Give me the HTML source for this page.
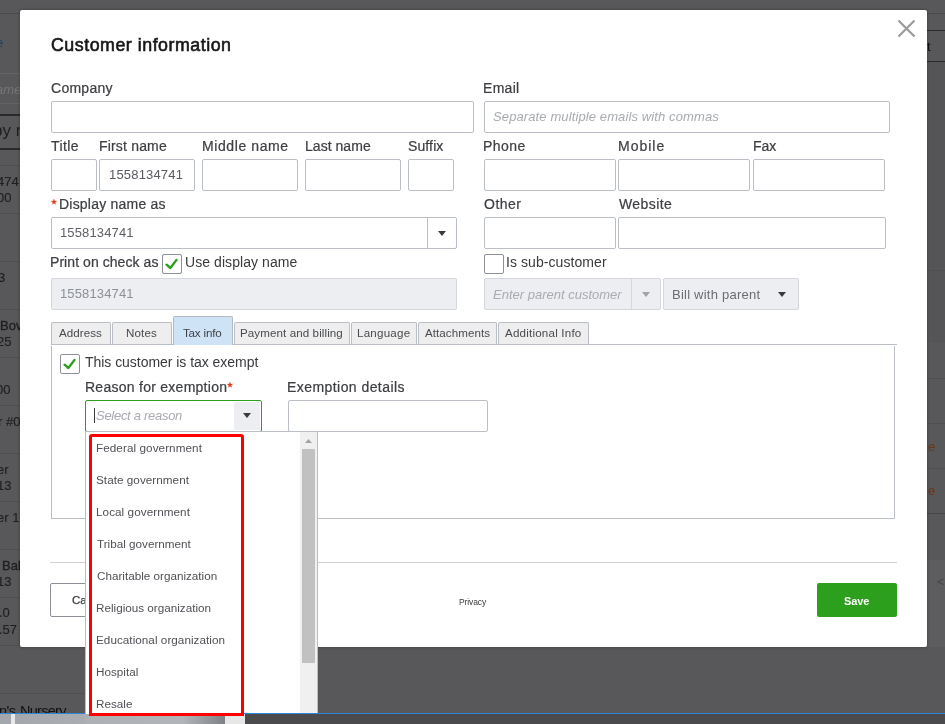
<!DOCTYPE html>
<html><head><meta charset="utf-8"><style>
html,body{margin:0;padding:0;}
body{width:945px;height:724px;overflow:hidden;position:relative;background:#58585a;font-family:"Liberation Sans",sans-serif;}
.t{position:absolute;white-space:nowrap;will-change:transform;}
.r{position:absolute;}
</style></head><body>
<div class="r" style="left:0px;top:13px;width:20px;height:1px;background:#4a4a4c"></div>
<div class="r" style="left:927px;top:13px;width:18px;height:1px;background:#4a4a4c"></div>
<div class="r" style="left:0px;top:73px;width:20px;height:1px;background:#636365"></div>
<div class="r" style="left:0px;top:103px;width:20px;height:1px;background:#636365"></div>
<div class="r" style="left:0px;top:114px;width:20px;height:2px;background:#2a2a2b"></div>
<div class="r" style="left:0px;top:148px;width:20px;height:2px;background:#2a2a2b"></div>
<div class="r" style="left:0px;top:165px;width:20px;height:1px;background:#4f4f51"></div>
<div class="r" style="left:0px;top:213px;width:20px;height:1px;background:#4f4f51"></div>
<div class="r" style="left:0px;top:261px;width:20px;height:1px;background:#4f4f51"></div>
<div class="r" style="left:0px;top:309px;width:20px;height:1px;background:#4f4f51"></div>
<div class="r" style="left:0px;top:357px;width:20px;height:1px;background:#4f4f51"></div>
<div class="r" style="left:0px;top:405px;width:20px;height:1px;background:#4f4f51"></div>
<div class="r" style="left:0px;top:453px;width:20px;height:1px;background:#4f4f51"></div>
<div class="r" style="left:0px;top:501px;width:20px;height:1px;background:#4f4f51"></div>
<div class="r" style="left:0px;top:549px;width:20px;height:1px;background:#4f4f51"></div>
<div class="r" style="left:0px;top:597px;width:20px;height:1px;background:#4f4f51"></div>
<div class="r" style="left:0px;top:645px;width:20px;height:1px;background:#4f4f51"></div>
<div class="r" style="left:0px;top:693px;width:85px;height:1px;background:#4f4f51"></div>
<div class="t" style="left:-4.50px;top:35.50px;color:#15426a;font-size:13px;line-height:13px;">e</div>
<div class="t" style="left:-4.00px;top:82.50px;color:#747476;font-size:13px;line-height:13px;font-style:italic;">ame</div>
<div class="t" style="left:-7.00px;top:121.61px;color:#1e1e1f;font-size:17px;line-height:17px;">by r</div>
<div class="t" style="left:-3.00px;top:175.00px;color:#1f1f20;font-size:13px;line-height:13px;-webkit-text-stroke:0.15px #1f1f20;">474</div>
<div class="t" style="left:-3.50px;top:191.00px;color:#1f1f20;font-size:13px;line-height:13px;-webkit-text-stroke:0.15px #1f1f20;">00</div>
<div class="t" style="left:-2.50px;top:271.00px;color:#1f1f20;font-size:13px;line-height:13px;-webkit-text-stroke:0.15px #1f1f20;">3</div>
<div class="t" style="left:-0.50px;top:318.50px;color:#1e1e1f;font-size:13px;line-height:13px;-webkit-text-stroke:0.3px #1e1e1f;">Bov</div>
<div class="t" style="left:-3.50px;top:334.70px;color:#1f1f20;font-size:13px;line-height:13px;-webkit-text-stroke:0.15px #1f1f20;">25</div>
<div class="t" style="left:-4.50px;top:383.00px;color:#1f1f20;font-size:13px;line-height:13px;-webkit-text-stroke:0.15px #1f1f20;">00</div>
<div class="t" style="left:-2.00px;top:414.60px;color:#1f1f20;font-size:13px;line-height:13px;-webkit-text-stroke:0.15px #1f1f20;">r #0</div>
<div class="t" style="left:-3.00px;top:462.60px;color:#1f1f20;font-size:13px;line-height:13px;-webkit-text-stroke:0.15px #1f1f20;">er</div>
<div class="t" style="left:-3.50px;top:478.60px;color:#1f1f20;font-size:13px;line-height:13px;-webkit-text-stroke:0.15px #1f1f20;">13</div>
<div class="t" style="left:-3.00px;top:510.50px;color:#1f1f20;font-size:13px;line-height:13px;-webkit-text-stroke:0.15px #1f1f20;">er 1</div>
<div class="t" style="left:2.30px;top:559.00px;color:#1e1e1f;font-size:13px;line-height:13px;-webkit-text-stroke:0.3px #1e1e1f;">Bal</div>
<div class="t" style="left:-3.50px;top:574.50px;color:#1f1f20;font-size:13px;line-height:13px;-webkit-text-stroke:0.15px #1f1f20;">13</div>
<div class="t" style="left:-0.80px;top:606.00px;color:#1f1f20;font-size:13px;line-height:13px;-webkit-text-stroke:0.15px #1f1f20;">.0</div>
<div class="t" style="left:-0.80px;top:622.60px;color:#1f1f20;font-size:13px;line-height:13px;-webkit-text-stroke:0.15px #1f1f20;">.57</div>
<div class="t" style="left:20.20px;top:703.73px;color:#111112;font-size:14.5px;line-height:14.5px;letter-spacing:-0.717px;">Nursery</div>
<div class="t" style="left:-0.70px;top:703.73px;color:#111112;font-size:14.5px;line-height:14.5px;letter-spacing:-0.500px;">n's</div>
<div class="r" style="left:927px;top:30px;width:18px;height:1px;background:#2a2a2b"></div>
<div class="r" style="left:927px;top:61px;width:18px;height:1px;background:#2a2a2b"></div>
<div class="r" style="left:927px;top:62px;width:18px;height:281px;background:#555557"></div>
<div class="r" style="left:927px;top:270px;width:18px;height:1px;background:#4f4f51"></div>
<div class="r" style="left:927px;top:378px;width:18px;height:1px;background:#4f4f51"></div>
<div class="r" style="left:927px;top:423px;width:18px;height:1px;background:#4f4f51"></div>
<div class="r" style="left:927px;top:468px;width:18px;height:1px;background:#4f4f51"></div>
<div class="t" style="left:927.00px;top:40.00px;color:#111;font-size:13px;line-height:13px;">t</div>
<div class="t" style="left:927.50px;top:439.50px;color:#6e3414;font-size:13px;line-height:13px;">e</div>
<div class="t" style="left:927.50px;top:484.00px;color:#6e3414;font-size:13px;line-height:13px;">e</div>
<div class="r" style="left:927px;top:513px;width:18px;height:1px;background:#454547"></div>
<div class="r" style="left:927px;top:560px;width:18px;height:87px;background:#5d5d5f"></div>
<div class="t" style="left:937.30px;top:575.84px;color:#434345;font-size:12px;line-height:12px;">&lt;</div>
<div class="r" style="left:0px;top:713px;width:945px;height:1px;background:#2f86d6"></div>
<div class="r" style="left:0px;top:714px;width:945px;height:10px;background:#4b4b4d"></div>
<div class="r" style="left:0px;top:714px;width:225px;height:10px;background:linear-gradient(90deg,#a3a7ab 0%,#b1b5b9 80%,#7e8286 100%)"></div>
<div class="r" style="left:11px;top:714px;width:4px;height:10px;background:#e9e9e9"></div>
<div class="r" style="left:225px;top:714px;width:20px;height:10px;background:#e7e7e7"></div>
<div class="r" style="left:20px;top:10px;width:907px;height:637px;background:#fff;border-radius:2px;box-shadow:0 0 3px rgba(0,0,0,.35)"></div>
<svg class="r" style="left:896px;top:18px" width="21" height="21" viewBox="0 0 21 21"><path d="M2.5 2.5 L18.5 18.5 M18.5 2.5 L2.5 18.5" stroke="#9a9a9a" stroke-width="2.2" fill="none"/></svg>
<div class="t" style="left:51.30px;top:36.73px;color:#161616;font-size:17.8px;line-height:17.8px;-webkit-text-stroke:0.6px #161616;letter-spacing:0.526px;">Customer information</div>
<div class="t" style="left:51.20px;top:80.95px;color:#3d3e42;font-size:14px;line-height:14px;-webkit-text-stroke:0.22px #3d3e42;letter-spacing:0.267px;">Company</div>
<div class="t" style="left:483.00px;top:80.95px;color:#3d3e42;font-size:14px;line-height:14px;-webkit-text-stroke:0.22px #3d3e42;letter-spacing:0.300px;">Email</div>
<div class="r" style="left:51px;top:101px;width:423px;height:32px;background:#fff;border:1px solid #babec5;border-radius:2px;box-sizing:border-box"></div>
<div class="r" style="left:484px;top:101px;width:406px;height:32px;background:#fff;border:1px solid #babec5;border-radius:2px;box-sizing:border-box"></div>
<div class="t" style="left:492.70px;top:110.00px;color:#a8abb1;font-size:13px;line-height:13px;font-style:italic;letter-spacing:0.114px;">Separate multiple emails with commas</div>
<div class="t" style="left:50.50px;top:139.15px;color:#3d3e42;font-size:14px;line-height:14px;-webkit-text-stroke:0.22px #3d3e42;letter-spacing:0.375px;">Title</div>
<div class="t" style="left:98.60px;top:139.15px;color:#3d3e42;font-size:14px;line-height:14px;-webkit-text-stroke:0.22px #3d3e42;letter-spacing:0.178px;">First name</div>
<div class="t" style="left:202.10px;top:139.15px;color:#3d3e42;font-size:14px;line-height:14px;-webkit-text-stroke:0.22px #3d3e42;letter-spacing:0.600px;">Middle name</div>
<div class="t" style="left:304.70px;top:139.15px;color:#3d3e42;font-size:14px;line-height:14px;-webkit-text-stroke:0.22px #3d3e42;letter-spacing:0.037px;">Last name</div>
<div class="t" style="left:408.00px;top:139.15px;color:#3d3e42;font-size:14px;line-height:14px;-webkit-text-stroke:0.22px #3d3e42;letter-spacing:0.120px;">Suffix</div>
<div class="t" style="left:483.00px;top:139.15px;color:#3d3e42;font-size:14px;line-height:14px;-webkit-text-stroke:0.22px #3d3e42;letter-spacing:0.425px;">Phone</div>
<div class="t" style="left:617.80px;top:139.15px;color:#3d3e42;font-size:14px;line-height:14px;-webkit-text-stroke:0.22px #3d3e42;letter-spacing:1.000px;">Mobile</div>
<div class="t" style="left:752.60px;top:139.15px;color:#3d3e42;font-size:14px;line-height:14px;-webkit-text-stroke:0.22px #3d3e42;">Fax</div>
<div class="r" style="left:51px;top:159px;width:46px;height:32px;background:#fff;border:1px solid #babec5;border-radius:2px;box-sizing:border-box"></div>
<div class="r" style="left:99px;top:159px;width:96px;height:32px;background:#fff;border:1px solid #babec5;border-radius:2px;box-sizing:border-box"></div>
<div class="r" style="left:202px;top:159px;width:96px;height:32px;background:#fff;border:1px solid #babec5;border-radius:2px;box-sizing:border-box"></div>
<div class="r" style="left:305px;top:159px;width:96px;height:32px;background:#fff;border:1px solid #babec5;border-radius:2px;box-sizing:border-box"></div>
<div class="r" style="left:408px;top:159px;width:46px;height:32px;background:#fff;border:1px solid #babec5;border-radius:2px;box-sizing:border-box"></div>
<div class="r" style="left:484px;top:159px;width:132px;height:32px;background:#fff;border:1px solid #babec5;border-radius:2px;box-sizing:border-box"></div>
<div class="r" style="left:618px;top:159px;width:132px;height:32px;background:#fff;border:1px solid #babec5;border-radius:2px;box-sizing:border-box"></div>
<div class="r" style="left:753px;top:159px;width:132px;height:32px;background:#fff;border:1px solid #babec5;border-radius:2px;box-sizing:border-box"></div>
<div class="t" style="left:108.50px;top:167.60px;color:#5a5b60;font-size:13px;line-height:13px;letter-spacing:0.178px;">1558134741</div>
<svg class="r" style="left:49.6px;top:197.9px" width="8" height="8"><polygon points="4.00,1.10 4.72,3.01 6.76,3.10 5.16,4.38 5.70,6.35 4.00,5.22 2.30,6.35 2.84,4.38 1.24,3.10 3.28,3.01" fill="#de3f1f" stroke="#de3f1f" stroke-width="0.3" stroke-linejoin="round"/></svg>
<div class="t" style="left:58.50px;top:197.15px;color:#3d3e42;font-size:14px;line-height:14px;-webkit-text-stroke:0.22px #3d3e42;letter-spacing:0.214px;">Display name as</div>
<div class="t" style="left:484.00px;top:197.15px;color:#3d3e42;font-size:14px;line-height:14px;-webkit-text-stroke:0.22px #3d3e42;letter-spacing:0.500px;">Other</div>
<div class="t" style="left:619.00px;top:197.15px;color:#3d3e42;font-size:14px;line-height:14px;-webkit-text-stroke:0.22px #3d3e42;letter-spacing:0.400px;">Website</div>
<div class="r" style="left:51px;top:217px;width:406px;height:32px;background:#fff;border:1px solid #babec5;border-radius:2px;box-sizing:border-box"></div>
<div class="r" style="left:427px;top:218px;width:1px;height:30px;background:#babec5"></div>
<svg class="r" style="left:438px;top:231px" width="8" height="5"><path d="M0 0 L8 0 L4 5 Z" fill="#393a3d"/></svg>
<div class="t" style="left:60.00px;top:226.00px;color:#5f6066;font-size:13px;line-height:13px;letter-spacing:0.144px;">1558134741</div>
<div class="r" style="left:484px;top:217px;width:132px;height:32px;background:#fff;border:1px solid #babec5;border-radius:2px;box-sizing:border-box"></div>
<div class="r" style="left:618px;top:217px;width:268px;height:32px;background:#fff;border:1px solid #babec5;border-radius:2px;box-sizing:border-box"></div>
<div class="t" style="left:50.20px;top:255.15px;color:#3d3e42;font-size:14px;line-height:14px;-webkit-text-stroke:0.22px #3d3e42;letter-spacing:0.062px;">Print on check as</div>
<div class="r" style="left:162px;top:254px;width:20px;height:20px;border:1px solid #8d9096;border-radius:2px;box-sizing:border-box;background:#fff"></div>
<svg class="r" style="left:162px;top:254px" width="20" height="20" viewBox="0 0 20 20"><path d="M4.6 10.7 L8.4 14 L14.5 5.9" stroke="#2ca01c" stroke-width="2.4" fill="none" stroke-linecap="round" stroke-linejoin="round"/></svg>
<div class="t" style="left:185.40px;top:255.15px;color:#393a3d;font-size:14px;line-height:14px;letter-spacing:0.067px;">Use display name</div>
<div class="r" style="left:51px;top:278px;width:406px;height:32px;background:#eceef1;border:1px solid #d4d7dc;border-radius:2px;box-sizing:border-box"></div>
<div class="t" style="left:60.00px;top:287.00px;color:#8d9096;font-size:13px;line-height:13px;letter-spacing:0.144px;">1558134741</div>
<div class="r" style="left:484px;top:254px;width:20px;height:20px;border:1px solid #8d9096;border-radius:2px;box-sizing:border-box;background:#fff"></div>
<div class="t" style="left:506.40px;top:255.15px;color:#393a3d;font-size:14px;line-height:14px;letter-spacing:0.071px;">Is sub-customer</div>
<div class="r" style="left:484px;top:278px;width:177px;height:32px;background:#eceef1;border:1px solid #d4d7dc;border-radius:2px;box-sizing:border-box"></div>
<div class="r" style="left:631px;top:279px;width:1px;height:30px;background:#d4d7dc"></div>
<div class="t" style="left:492.60px;top:288.00px;color:#a8abb1;font-size:13px;line-height:13px;font-style:italic;width:130px;overflow:hidden">Enter parent customer</div>
<svg class="r" style="left:642px;top:292px" width="8" height="5"><path d="M0 0 L8 0 L4 5 Z" fill="#a0a3a8"/></svg>
<div class="r" style="left:663px;top:278px;width:136px;height:32px;background:#eceef1;border:1px solid #d4d7dc;border-radius:2px;box-sizing:border-box"></div>
<div class="t" style="left:671.70px;top:288.00px;color:#6b6c72;font-size:13px;line-height:13px;letter-spacing:0.233px;">Bill with parent</div>
<svg class="r" style="left:778px;top:292px" width="8" height="5"><path d="M0 0 L8 0 L4 5 Z" fill="#393a3d"/></svg>
<div class="r" style="left:51px;top:344px;width:846px;height:1px;background:#babec5"></div>
<div class="r" style="left:51px;top:346px;width:844px;height:173px;border:1px solid #babec5;border-top:none;box-sizing:border-box;background:#fff"></div>
<div class="r" style="left:51px;top:322px;width:60px;height:22px;background:#eeeeee;border:1px solid #babec5;border-bottom:none;border-radius:2px 2px 0 0;box-sizing:border-box"></div>
<div class="t" style="left:59.40px;top:327.18px;color:#4a4b50;font-size:11.6px;line-height:11.6px;letter-spacing:0.050px;">Address</div>
<div class="r" style="left:112px;top:322px;width:60px;height:22px;background:#eeeeee;border:1px solid #babec5;border-bottom:none;border-radius:2px 2px 0 0;box-sizing:border-box"></div>
<div class="t" style="left:125.70px;top:327.18px;color:#4a4b50;font-size:11.6px;line-height:11.6px;letter-spacing:0.150px;">Notes</div>
<div class="r" style="left:234px;top:322px;width:116px;height:22px;background:#eeeeee;border:1px solid #babec5;border-bottom:none;border-radius:2px 2px 0 0;box-sizing:border-box"></div>
<div class="t" style="left:239.60px;top:327.18px;color:#4a4b50;font-size:11.6px;line-height:11.6px;letter-spacing:0.089px;">Payment and billing</div>
<div class="r" style="left:351px;top:322px;width:66px;height:22px;background:#eeeeee;border:1px solid #babec5;border-bottom:none;border-radius:2px 2px 0 0;box-sizing:border-box"></div>
<div class="t" style="left:357.00px;top:327.18px;color:#4a4b50;font-size:11.6px;line-height:11.6px;letter-spacing:0.214px;">Language</div>
<div class="r" style="left:418px;top:322px;width:79px;height:22px;background:#eeeeee;border:1px solid #babec5;border-bottom:none;border-radius:2px 2px 0 0;box-sizing:border-box"></div>
<div class="t" style="left:425.20px;top:327.18px;color:#4a4b50;font-size:11.6px;line-height:11.6px;letter-spacing:0.060px;">Attachments</div>
<div class="r" style="left:498px;top:322px;width:91px;height:22px;background:#eeeeee;border:1px solid #babec5;border-bottom:none;border-radius:2px 2px 0 0;box-sizing:border-box"></div>
<div class="t" style="left:505.20px;top:327.18px;color:#4a4b50;font-size:11.6px;line-height:11.6px;letter-spacing:0.200px;">Additional Info</div>
<div class="r" style="left:173px;top:316px;width:60px;height:29px;background:#cfe3f7;border:1px solid #b4bac2;border-bottom:none;border-radius:2px 2px 0 0;box-sizing:border-box"></div>
<div class="t" style="left:183.00px;top:327.18px;color:#3f4045;font-size:11.6px;line-height:11.6px;letter-spacing:-0.186px;">Tax info</div>
<div class="r" style="left:60px;top:354px;width:20px;height:20px;border:1px solid #8d9096;border-radius:2px;box-sizing:border-box;background:#fff"></div>
<svg class="r" style="left:60px;top:354px" width="20" height="20" viewBox="0 0 20 20"><path d="M4.6 10.7 L8.4 14 L14.5 5.9" stroke="#2ca01c" stroke-width="2.4" fill="none" stroke-linecap="round" stroke-linejoin="round"/></svg>
<div class="t" style="left:84.50px;top:355.15px;color:#393a3d;font-size:14px;line-height:14px;letter-spacing:-0.038px;">This customer is tax exempt</div>
<div class="t" style="left:85.00px;top:380.15px;color:#3d3e42;font-size:14px;line-height:14px;-webkit-text-stroke:0.22px #3d3e42;letter-spacing:0.263px;">Reason for exemption</div>
<svg class="r" style="left:226.4px;top:380.7px" width="8" height="8"><polygon points="4.00,1.10 4.72,3.01 6.76,3.10 5.16,4.38 5.70,6.35 4.00,5.22 2.30,6.35 2.84,4.38 1.24,3.10 3.28,3.01" fill="#de3f1f" stroke="#de3f1f" stroke-width="0.3" stroke-linejoin="round"/></svg>
<div class="t" style="left:287.10px;top:380.15px;color:#3d3e42;font-size:14px;line-height:14px;-webkit-text-stroke:0.22px #3d3e42;letter-spacing:0.438px;">Exemption details</div>
<div class="r" style="left:288px;top:400px;width:200px;height:32px;background:#fff;border:1px solid #babec5;border-radius:2px;box-sizing:border-box"></div>
<div class="r" style="left:85px;top:400px;width:177px;height:32px;border:1px solid #2ca01c;border-radius:2px;box-sizing:border-box;background:#fff"></div>
<div class="r" style="left:234px;top:402px;width:26px;height:28px;background:#eceef1"></div>
<svg class="r" style="left:243px;top:413px" width="8" height="5"><path d="M0 0 L8 0 L4 5 Z" fill="#393a3d"/></svg>
<div class="r" style="left:94px;top:408px;width:1px;height:15px;background:#393a3d"></div>
<div class="t" style="left:95.70px;top:409.00px;color:#a8abb1;font-size:13px;line-height:13px;font-style:italic;letter-spacing:-0.286px;">Select a reason</div>
<div class="r" style="left:50px;top:562px;width:847px;height:1px;background:#d2d2d2"></div>
<div class="r" style="left:50px;top:583px;width:90px;height:34px;border:1px solid #8d9096;border-radius:2px;box-sizing:border-box;background:#fff"></div>
<div class="t" style="left:72.30px;top:595.27px;color:#393a3d;font-size:11.5px;line-height:11.5px;-webkit-text-stroke:0.25px #393a3d;">Cancel</div>
<div class="t" style="left:459.00px;top:597.80px;color:#393a3d;font-size:8.5px;line-height:8.5px;letter-spacing:-0.100px;">Privacy</div>
<div class="r" style="left:817px;top:583px;width:80px;height:34px;background:#2ca01c;border-radius:2px"></div>
<div class="t" style="left:844.00px;top:595.69px;color:#fff;font-size:11px;line-height:11px;font-weight:700;letter-spacing:-0.067px;">Save</div>
<div class="r" style="left:85px;top:431px;width:233px;height:290px;background:#fff;border-left:1px solid #babec5;border-right:1px solid #babec5;border-top:1px solid #babec5;box-sizing:border-box"></div>
<div class="r" style="left:300px;top:432px;width:17px;height:281px;background:#f0f0f0"></div>
<div class="r" style="left:302px;top:449px;width:13px;height:214px;background:#c1c1c1"></div>
<svg class="r" style="left:305px;top:439px" width="7" height="4"><path d="M0 4 L7 4 L3.5 0 Z" fill="#a3a3a3"/></svg>
<div class="t" style="left:95.70px;top:442.10px;color:#505156;font-size:11.7px;line-height:11.7px;letter-spacing:0.076px;">Federal government</div>
<div class="t" style="left:95.70px;top:474.10px;color:#505156;font-size:11.7px;line-height:11.7px;letter-spacing:0.047px;">State government</div>
<div class="t" style="left:95.70px;top:506.10px;color:#505156;font-size:11.7px;line-height:11.7px;letter-spacing:0.067px;">Local government</div>
<div class="t" style="left:96.70px;top:538.10px;color:#505156;font-size:11.7px;line-height:11.7px;">Tribal government</div>
<div class="t" style="left:96.70px;top:570.10px;color:#505156;font-size:11.7px;line-height:11.7px;">Charitable organization</div>
<div class="t" style="left:95.70px;top:602.10px;color:#505156;font-size:11.7px;line-height:11.7px;">Religious organization</div>
<div class="t" style="left:95.70px;top:634.10px;color:#505156;font-size:11.7px;line-height:11.7px;letter-spacing:0.043px;">Educational organization</div>
<div class="t" style="left:95.70px;top:666.10px;color:#505156;font-size:11.7px;line-height:11.7px;">Hospital</div>
<div class="t" style="left:95.70px;top:698.10px;color:#505156;font-size:11.7px;line-height:11.7px;">Resale</div>
<div class="r" style="left:89px;top:434px;width:155px;height:282px;border:3px solid #ff0000;border-radius:3px;box-sizing:border-box"></div>
<div class="r" style="left:85px;top:714px;width:233px;height:10px;background:#4b4b4d"></div>
<div class="r" style="left:85px;top:714px;width:140px;height:10px;background:linear-gradient(90deg,#adb1b5 0%,#b1b5b9 70%,#7e8286 100%)"></div>
<div class="r" style="left:225px;top:714px;width:20px;height:10px;background:#e7e7e7"></div>
<div class="r" style="left:244px;top:713px;width:74px;height:1px;background:#2f86d6"></div>
<div class="r" style="left:89px;top:713px;width:155px;height:3px;background:#ff0000"></div>
</body></html>
